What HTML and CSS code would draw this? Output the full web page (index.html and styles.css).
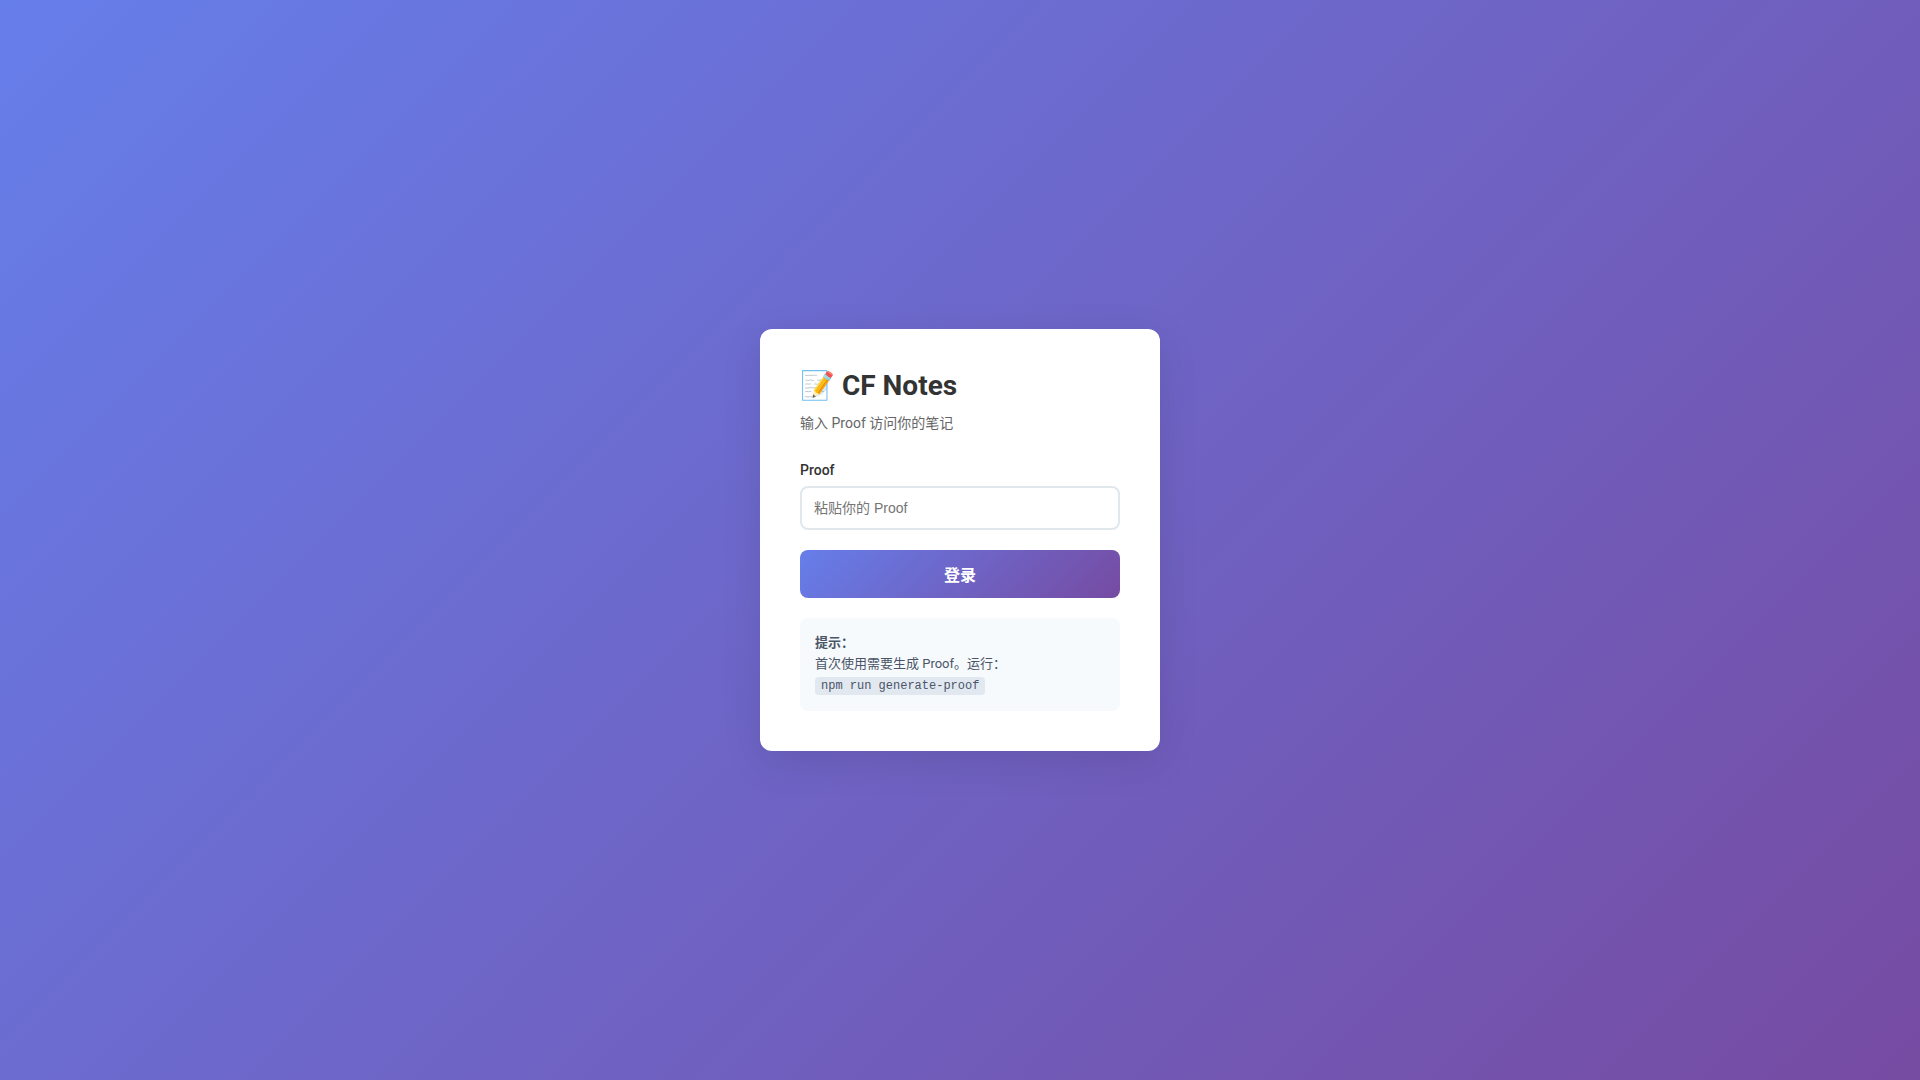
FILE: index.html
```html
<!DOCTYPE html>
<html lang="zh-CN">
<head>
<meta charset="UTF-8">
<meta name="viewport" content="width=device-width, initial-scale=1.0">
<title>CF Notes</title>
<link rel="stylesheet" href="styles.css">
</head>
<body>
<main class="card">
  <h1 class="title">📝 CF Notes</h1>
  <p class="subtitle">输入 Proof 访问你的笔记</p>
  <form>
    <div class="field">
      <label class="label" for="proof">Proof</label>
      <input class="input" type="password" id="proof" placeholder="粘贴你的 Proof">
    </div>
    <button class="button" type="submit">登录</button>
  </form>
  <div class="hint">
    <strong>提示：</strong><br>
    首次使用需要生成 Proof。运行：<br>
    <code class="code">npm run generate-proof</code>
  </div>
</main>
</body>
</html>
```
FILE: styles.css
```css
* {
  margin: 0;
  padding: 0;
  box-sizing: border-box;
}

body {
  font-family: Roboto, "Noto Sans CJK SC", sans-serif;
  background: linear-gradient(135deg, #667eea 0%, #764ba2 100%);
  min-height: 100vh;
  display: flex;
  align-items: center;
  justify-content: center;
}

.card {
  background: white;
  border-radius: 12px;
  padding: 40px;
  width: 100%;
  max-width: 400px;
  box-shadow: 0 10px 40px rgba(0, 0, 0, 0.1);
}

.title {
  font-size: 28px;
  color: #333;
  margin-bottom: 10px;
}

.subtitle {
  font-size: 14px;
  color: #666;
  margin-bottom: 30px;
}

.field {
  margin-bottom: 20px;
}

.label {
  display: block;
  font-size: 14px;
  font-weight: 500;
  color: #333;
  margin-bottom: 8px;
}

.input {
  width: 100%;
  padding: 12px;
  border: 2px solid #e1e8ed;
  border-radius: 8px;
  font-size: 14px;
  font-family: "Liberation Sans", "Noto Sans CJK SC", sans-serif;
}

.button {
  width: 100%;
  padding: 12px;
  background: linear-gradient(135deg, #667eea 0%, #764ba2 100%);
  color: white;
  border: none;
  border-radius: 8px;
  font-size: 16px;
  font-weight: 600;
  font-family: "Liberation Sans", "Noto Sans CJK SC", sans-serif;
  cursor: pointer;
}

.hint {
  margin-top: 20px;
  padding: 15px;
  background: #f7fafc;
  border-radius: 8px;
  font-size: 13px;
  color: #4a5568;
  line-height: 1.6;
}

.code {
  background: #e2e8f0;
  padding: 2px 6px;
  border-radius: 4px;
  font-family: "Liberation Mono", monospace;
  font-size: 12px;
}
```
